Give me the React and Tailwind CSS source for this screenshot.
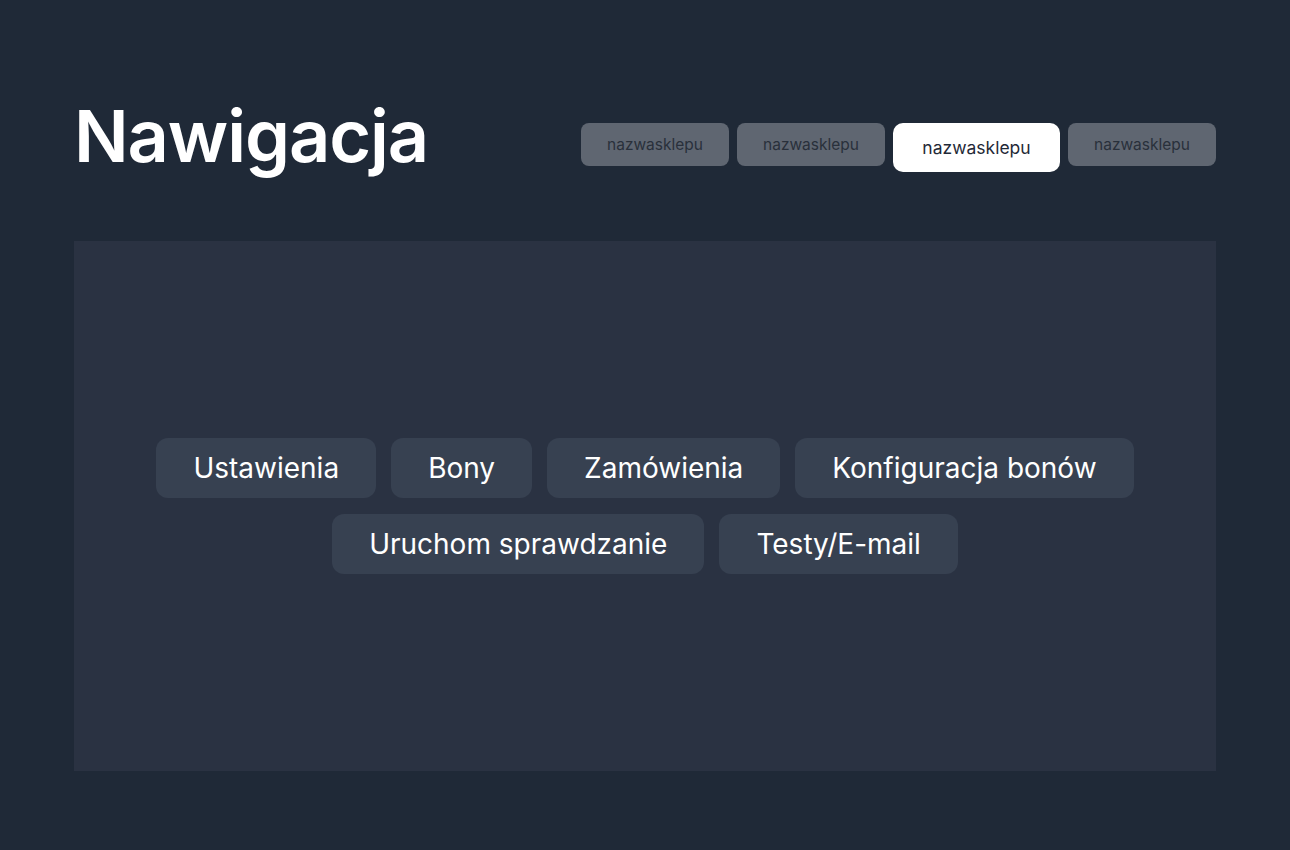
import React from 'react';

const shops = ['nazwasklepu', 'nazwasklepu', 'nazwasklepu', 'nazwasklepu'];
const links = ['Ustawienia', 'Bony', 'Zamówienia', 'Konfiguracja bonów', 'Uruchom sprawdzanie', 'Testy/E-mail'];

const App = () => {
  const active = 2;

  return (
    <div className="min-h-screen bg-[#1f2937] px-[74px] pt-[100px] pb-[79px] font-['Inter',sans-serif]">
      {/* Header */}
      <header className="flex justify-between items-start">
        <h1 className="text-[72px] leading-none font-semibold text-white tracking-[-0.015em]">Nawigacja</h1>
        <div className="flex items-start gap-2 mt-[23px]">
          {shops.map((shop, i) =>
            i === active ? (
              <button
                key={i}
                className="w-[167px] h-[49px] rounded-[10px] bg-white text-[17.5px] pt-[1px] text-[#1f2937]"
              >
                {shop}
              </button>
            ) : (
              <button
                key={i}
                className="w-[148px] h-[43px] rounded-lg bg-[#5f6671] text-[15.5px] text-[#29303b]"
              >
                {shop}
              </button>
            )
          )}
        </div>
      </header>

      {/* Panel */}
      <main className="mt-[69px] h-[530px] bg-[#2a3242] flex items-center justify-center">
        <div className="max-w-[1000px] flex flex-wrap justify-center gap-x-[15px] gap-y-4">
          {links.map((link) => (
            <button
              key={link}
              className="h-[60px] px-[37px] rounded-xl bg-[#374151] text-[28px] text-white"
            >
              {link}
            </button>
          ))}
        </div>
      </main>
    </div>
  );
};

export default App;
